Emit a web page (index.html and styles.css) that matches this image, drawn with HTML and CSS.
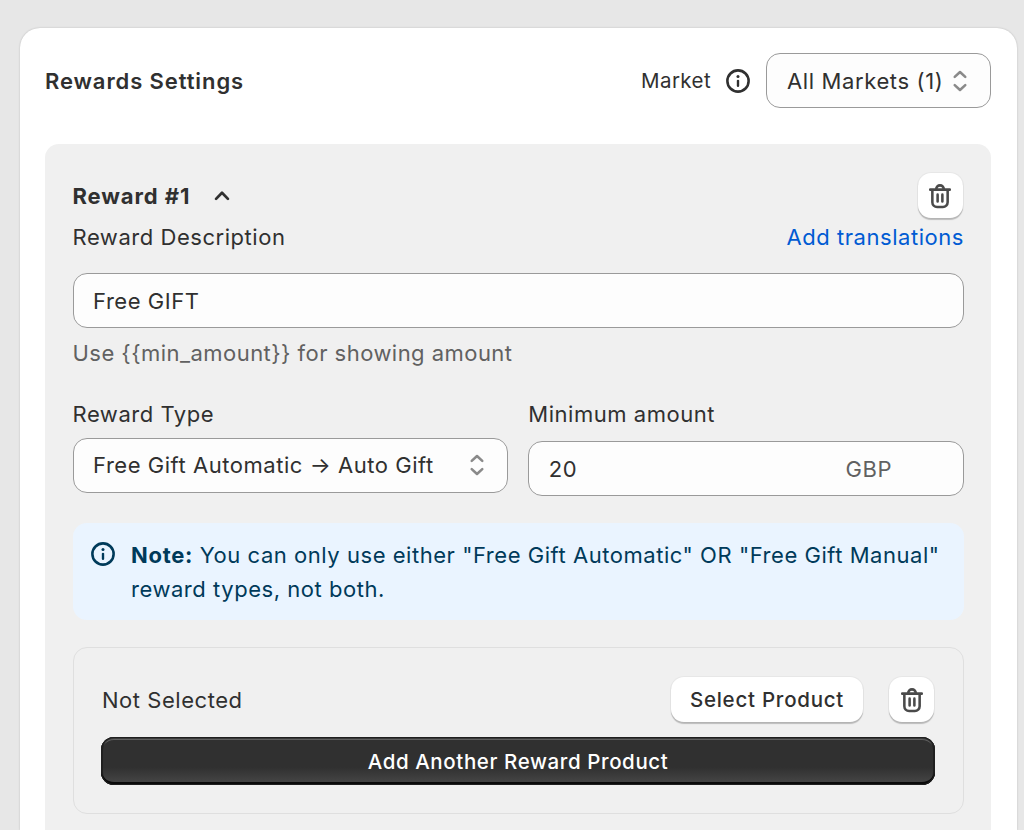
FILE: index.html
```html
<!DOCTYPE html>
<html lang="en">
<head>
    <meta charset="UTF-8">
    <meta name="viewport" content="width=device-width, initial-scale=1.0">
    <title>Rewards Settings</title>
    <link rel="stylesheet" href="styles.css">
</head>
<body>
    <!-- Shared icons -->
    <svg class="icon-defs" width="0" height="0">
        <symbol id="icon-info" viewBox="0 0 20 20">
            <circle cx="10" cy="10" r="6.25" fill="none" stroke="currentColor" stroke-width="1.5"/>
            <path d="M10 9.9v2.9" fill="none" stroke="currentColor" stroke-width="1.4" stroke-linecap="round"/>
            <circle cx="10" cy="7.3" r="0.9" fill="currentColor"/>
        </symbol>
        <symbol id="icon-select" viewBox="0 0 20 20">
            <path d="M6.9 7.6L10 4.7L13.1 7.6M6.9 12.4L10 15.3L13.1 12.4" fill="none" stroke="currentColor" stroke-width="1.5" stroke-linecap="round" stroke-linejoin="round"/>
        </symbol>
        <symbol id="icon-chevron-up" viewBox="0 0 20 20">
            <path d="M6.5 11.7L10 8.1L13.5 11.7" fill="none" stroke="currentColor" stroke-width="1.6" stroke-linecap="round" stroke-linejoin="round"/>
        </symbol>
        <symbol id="icon-delete" viewBox="0 0 20 20">
            <path d="M4.25 6.25H15.75M7.75 6A2.25 2.25 0 0 1 12.25 6M5.5 6.5V13.7A2.8 2.8 0 0 0 8.3 16.5H11.7A2.8 2.8 0 0 0 14.5 13.7V6.5M8.6 9.2V13.2M11.4 9.2V13.2" fill="none" stroke="currentColor" stroke-width="1.5" stroke-linecap="round"/>
        </symbol>
    </svg>

    <div class="card">
        <!-- Card header -->
        <div class="card-header">
            <h2>Rewards Settings</h2>
            <div class="market">
                <span class="market-label">Market</span>
                <svg class="icon"><use href="#icon-info"/></svg>
                <div class="field market-select">
                    <span>All Markets (1)</span>
                    <svg class="icon select-icon"><use href="#icon-select"/></svg>
                </div>
            </div>
        </div>

        <!-- Reward -->
        <div class="reward">
            <div class="row reward-title">
                <h3>Reward #1 <svg class="icon"><use href="#icon-chevron-up"/></svg></h3>
                <button class="btn btn-icon" aria-label="Delete reward"><svg class="icon"><use href="#icon-delete"/></svg></button>
            </div>
            <div class="row description-label">
                <label for="description">Reward Description</label>
                <a href="#">Add translations</a>
            </div>
            <input id="description" class="field" type="text" value="Free GIFT">
            <p class="help-text">Use {{min_amount}} for showing amount</p>

            <div class="columns">
                <div class="column type-column">
                    <label>Reward Type</label>
                    <div class="field">
                        <span>Free Gift Automatic → Auto Gift</span>
                        <svg class="icon select-icon"><use href="#icon-select"/></svg>
                    </div>
                </div>
                <div class="column amount-column">
                    <label>Minimum amount</label>
                    <div class="field">
                        <span>20</span>
                        <span class="suffix">GBP</span>
                    </div>
                </div>
            </div>

            <div class="banner">
                <svg class="icon"><use href="#icon-info"/></svg>
                <p><strong>Note:</strong> You can only use either "Free Gift Automatic" OR "Free Gift Manual" reward types, not both.</p>
            </div>

            <!-- Reward products -->
            <div class="products">
                <div class="row">
                    <span>Not Selected</span>
                    <div class="product-actions">
                        <button class="btn btn-select">Select Product</button>
                        <button class="btn btn-icon" aria-label="Delete product"><svg class="icon"><use href="#icon-delete"/></svg></button>
                    </div>
                </div>
                <button class="btn btn-primary">Add Another Reward Product</button>
            </div>
        </div>
    </div>
</body>
</html>
```

FILE: styles.css
```css
:root {
    --text: #303030;
    --text-subdued: #616161;
    --info: #003a5a;
    --letter-gap: 0.54px;
    --letter-gap-strong: 0.9px;
}

* {
    box-sizing: border-box;
}

html {
    height: 100%;
    overflow: hidden;
}

body {
    margin: 0;
    padding: 28px 7px 0 20px;
    height: 100%;
    overflow: hidden;
    background-color: #e7e7e7;
    color: var(--text);
    font-family: Inter, sans-serif;
    font-size: 22px;
    line-height: 34px;
    letter-spacing: var(--letter-gap);
}

h2, h3, p {
    margin: 0;
    font-size: inherit;
}

h2,
h3 {
    letter-spacing: var(--letter-gap-strong);
}

h2 {
    font-weight: 600;
}

h3 {
    display: flex;
    align-items: center;
    gap: 15px;
    font-weight: 700;
}

a {
    color: #005bd3;
    text-decoration: none;
}

.icon-defs {
    display: block;
    position: absolute;
}

.icon {
    display: block;
    flex: none;
    width: 34px;
    height: 34px;
}

.card {
    height: 802px;
    padding: 25px 26px 0 25px;
    background-color: #fff;
    border-radius: 20px 20px 0 0;
    box-shadow: 0 0 2px rgba(0, 0, 0, 0.22);
}

.card-header,
.row {
    display: flex;
    justify-content: space-between;
    align-items: center;
}

.market {
    display: flex;
    align-items: center;
    letter-spacing: 0.62px;
}

.market-label {
    padding-top: 1px;
    font-size: 20.5px;
    letter-spacing: 0.4px;
}

.market .icon {
    margin: 0 11px 0 10px;
}

.field {
    display: flex;
    align-items: center;
    width: 100%;
    height: 55px;
    padding: 0 20px;
    background-color: #fdfdfd;
    border: 1px solid #9a9a9a;
    border-radius: 14px;
    color: var(--text);
    font: inherit;
    letter-spacing: inherit;
    white-space: nowrap;
}

.field .select-icon {
    margin: 0 -7px 0 auto;
    color: #8a8a8a;
}

.reward .field {
    padding-left: 19.5px;
}

.market-select {
    width: 225px;
}

.reward {
    height: 686px;
    margin-top: 36px;
    padding: 28px 27px 0 27.5px;
    background-color: #f0f0f0;
    border-radius: 14px 14px 0 0;
}

.reward-title {
    height: 48px;
}

.reward-title .btn-icon {
    margin: -1px 1.5px 0 0;
}

.description-label {
    margin-bottom: 19px;
}

.help-text {
    margin-top: 8px;
    color: var(--text-subdued);
    letter-spacing: 0.46px;
}

.columns {
    display: flex;
    gap: 20px;
    margin-top: 27px;
}

.column {
    flex: 1;
    display: flex;
    flex-direction: column;
}

.type-column {
    gap: 7px;
}

.type-column .field {
    padding-bottom: 2px;
}

.amount-column {
    gap: 10px;
}

.suffix {
    margin-left: auto;
    margin-right: 51px;
    color: var(--text-subdued);
}

.banner {
    display: flex;
    gap: 11px;
    margin-top: 27px;
    height: 97px;
    padding: 14px 10px 0 13.5px;
    background-color: #eaf4ff;
    border-radius: 14px;
    color: var(--info);
}

.banner p {
    padding-top: 1px;
}

.banner strong {
    letter-spacing: 0.7px;
}

.products {
    height: 167px;
    margin-top: 27px;
    padding: 29px 28px 0 27.5px;
    border: 1px solid #dfdfdf;
    border-radius: 14px;
}

.products .row {
    padding-left: 1px;
}

.product-actions {
    display: flex;
    gap: 26px;
    margin-right: 1px;
}

.btn {
    height: 45px;
    padding: 0;
    background-color: #fff;
    border: none;
    border-radius: 13px;
    box-shadow: 0 0 0 1px rgba(0, 0, 0, 0.035), 0 1.5px 1px rgba(0, 0, 0, 0.22);
    color: var(--text);
    font-family: inherit;
    font-size: 20.5px;
    font-weight: 550;
    letter-spacing: 0.75px;
}

.btn-select {
    width: 192px;
}

.btn-icon {
    width: 45px;
    padding: 0 5.5px;
    color: #4a4a4a;
}

.btn-primary {
    display: block;
    width: 100%;
    height: 48px;
    margin-top: 15px;
    background: linear-gradient(#303030 63%, #484848);
    box-shadow: inset 0 0 0 1px #1f1f1f, inset 0 2px 0 #3a3a3a, inset 0 -3px 0 #0a0a0a, inset 2px 0 0 #202020, inset -2px 0 0 #202020, inset 0 3px 0 #606060;
    color: #fff;
    letter-spacing: 0.6px;
}
```
